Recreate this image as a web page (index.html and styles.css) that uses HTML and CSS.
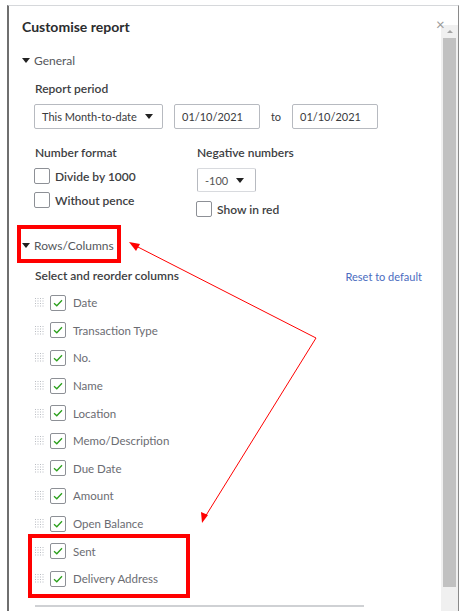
FILE: index.html
```html
<!DOCTYPE html>
<html lang="en">
<head>
    <meta charset="UTF-8">
    <meta name="viewport" content="width=device-width, initial-scale=1.0">
    <title>Customise report</title>
    <link rel="stylesheet" href="styles.css">
</head>
<body>
    <div class="frame">
        <div class="panel">
            <h1 class="title">Customise report</h1>

            <div class="toggle"><span class="caret"></span>General</div>
            <div class="section">
                <div class="label">Report period</div>
                <div class="period-row">
                    <div class="select period-select">This Month-to-date<span class="caret small"></span></div>
                    <div class="input date">01/10/2021</div>
                    <span class="to">to</span>
                    <div class="input date">01/10/2021</div>
                </div>

                <div class="format-row">
                    <div class="format-col">
                        <div class="label">Number format</div>
                        <label class="check"><span class="box"></span>Divide by 1000</label>
                        <label class="check"><span class="box"></span>Without pence</label>
                    </div>
                    <div class="format-col negative">
                        <div class="label">Negative numbers</div>
                        <div class="select neg-select">-100<span class="caret small"></span></div>
                        <label class="check"><span class="box"></span>Show in red</label>
                    </div>
                </div>
            </div>

            <div class="toggle rows-toggle"><span class="caret"></span>Rows/Columns</div>
            <div class="section">
                <div class="columns-head">
                    <span class="label">Select and reorder columns</span>
                    <a class="reset" href="#">Reset to default</a>
                </div>
                <ul class="columns" id="columns"></ul>
                <div class="divider"></div>
            </div>
        </div>

        <div class="scrollbar">
            <span class="close">&times;</span>
            <div class="track">
                <span class="arrow-up"></span>
                <div class="thumb"></div>
            </div>
        </div>
    </div>

    <!-- callout marks -->
    <div class="mark mark-rows"></div>
    <div class="mark mark-new"></div>
    <svg class="arrows" width="466" height="611" viewBox="0 0 466 611">
        <line x1="316" y1="338" x2="134" y2="245" stroke="#f00" stroke-width="1"/>
        <polygon points="129,242 140,244 136,251" fill="#f00"/>
        <line x1="316" y1="338" x2="205" y2="517" stroke="#f00" stroke-width="1"/>
        <polygon points="202,523 201,512 208,515" fill="#f00"/>
    </svg>

    <script>
        const columns = ['Date', 'Transaction Type', 'No.', 'Name', 'Location', 'Memo/Description',
            'Due Date', 'Amount', 'Open Balance', 'Sent', 'Delivery Address'];
        const list = document.getElementById('columns');
        const grip = '<svg class="grip" width="9" height="9" viewBox="0 0 9 9">' +
            [1, 3.5, 6, 8.5].map(y => [0.5, 3, 5.5, 8].map(x =>
                `<rect x="${x - 0.5}" y="${y - 1}" width="1" height="1" fill="#b9bcc2"/>`).join('')).join('') +
            '</svg>';
        const tick = '<svg width="10" height="8" viewBox="0 0 10 8"><path d="M1 4.2 L3.8 6.8 L9 1.2" fill="none" stroke="#2ca01c" stroke-width="1.3"/></svg>';
        columns.forEach(name => {
            const li = document.createElement('li');
            li.innerHTML = `${grip}<span class="box checked">${tick}</span><span class="name">${name}</span>`;
            list.appendChild(li);
        });
    </script>
</body>
</html>
```

FILE: styles.css
```css
body {
    margin: 0;
    background: #fff;
    font-family: Lato, "Open Sans", sans-serif;
    color: #393a3d;
    width: 466px;
    height: 611px;
    overflow: hidden;
    position: relative;
}
.frame {
    display: flex;
    margin: 5px 0 0 7px;
    width: 452px;
    height: 606px;
    border-top: 1px solid #d6d8db;
    border-left: 2px solid #6f6f6f;
    border-right: 1px solid #8a8a8a;
    box-sizing: border-box;
}
.panel {
    flex: 1;
    padding: 11px 0 0 13px;
}
.title {
    margin: 0;
    font-size: 14px;
    font-weight: 700;
    line-height: 20px;
    color: #2b2c2e;
}
.toggle {
    display: flex;
    align-items: center;
    margin-top: 14px;
    height: 18px;
    font-size: 12px;
    color: #55575c;
}
.caret {
    display: inline-block;
    width: 0;
    height: 0;
    border-left: 4px solid transparent;
    border-right: 4px solid transparent;
    border-top: 5px solid #222;
    margin-right: 4px;
}
.caret.small {
    margin: 0 0 0 auto;
}
.section {
    padding-left: 13px;
}
.label {
    font-size: 12px;
    font-weight: 600;
    line-height: 18px;
    color: #3d3e42;
}
.section > .label {
    margin-top: 11px;
}
.period-row {
    display: flex;
    align-items: center;
    margin-top: 6px;
    height: 25px;
}
.select, .input {
    display: flex;
    align-items: center;
    box-sizing: border-box;
    height: 25px;
    padding: 0 7px;
    border: 1px solid #b7bac0;
    border-radius: 2px;
    font-size: 11px;
    color: #393a3d;
}
.period-select {
    width: 129px;
    margin-left: -1px;
    padding-right: 9px;
}
.date {
    width: 86px;
    margin-left: 11px;
}
.to {
    width: 32px;
    text-align: center;
    font-size: 11px;
}
.date + .to + .date {
    margin-left: 0;
}
.format-row {
    display: flex;
    margin-top: 15px;
}
.format-col {
    width: 162px;
}
.format-col .label {
    margin-bottom: 6px;
}
.check {
    display: flex;
    align-items: center;
    height: 16px;
    margin-bottom: 8px;
    font-size: 12px;
    font-weight: 600;
    color: #3d3e42;
}
.box {
    display: inline-flex;
    align-items: center;
    justify-content: center;
    width: 16px;
    height: 16px;
    box-sizing: border-box;
    border: 1px solid #8d9096;
    border-radius: 2px;
    margin: 0 5px 0 -1px;
    background: #fff;
}
.neg-select {
    width: 59px;
    height: 24px;
    margin-bottom: 9px;
    padding-right: 11px;
    border-color: #d8dade #b7bac0;
    color: #555;
}
.rows-toggle {
    margin-top: 11px;
}
.columns-head {
    display: flex;
    justify-content: space-between;
    align-items: center;
    margin-top: 13px;
    width: 387px;
}
.reset {
    font-size: 11px;
    color: #4b6cc0;
    text-decoration: none;
}
.columns {
    list-style: none;
    margin: 4px 0 0;
    padding: 0;
}
.columns li {
    display: flex;
    align-items: center;
    height: 27.6px;
}
.grip {
    margin: 0 6px 0 0;
}
.box.checked {
    margin: 0 7px 0 0;
}
.name {
    font-size: 11.5px;
    color: #6b6c72;
}
.divider {
    width: 329px;
    margin-top: 12px;
    border-top: 2px solid #cfd1d4;
}
.scrollbar {
    position: relative;
    width: 17px;
    padding-top: 19px;
    display: flex;
    flex-direction: column;
}
.close {
    position: absolute;
    left: -5px;
    top: 11px;
    font-size: 15px;
    line-height: 14px;
    color: #9a9a9a;
}
.track {
    flex: 1;
    background: #f0f0f0;
    display: flex;
    flex-direction: column;
    align-items: center;
}
.arrow-up {
    margin-top: 5px;
    width: 0;
    height: 0;
    border-left: 3px solid transparent;
    border-right: 3px solid transparent;
    border-bottom: 3px solid #a3a3a3;
}
.thumb {
    margin-top: 5px;
    width: 13px;
    height: 549px;
    background: #c1c1c1;
}
.mark {
    position: absolute;
    border: 4px solid #f00;
    box-sizing: border-box;
}
.mark-rows {
    left: 17px;
    top: 225px;
    width: 104px;
    height: 38px;
}
.mark-new {
    left: 28px;
    top: 534px;
    width: 162px;
    height: 64px;
}
.arrows {
    position: absolute;
    left: 0;
    top: 0;
    pointer-events: none;
}
```
